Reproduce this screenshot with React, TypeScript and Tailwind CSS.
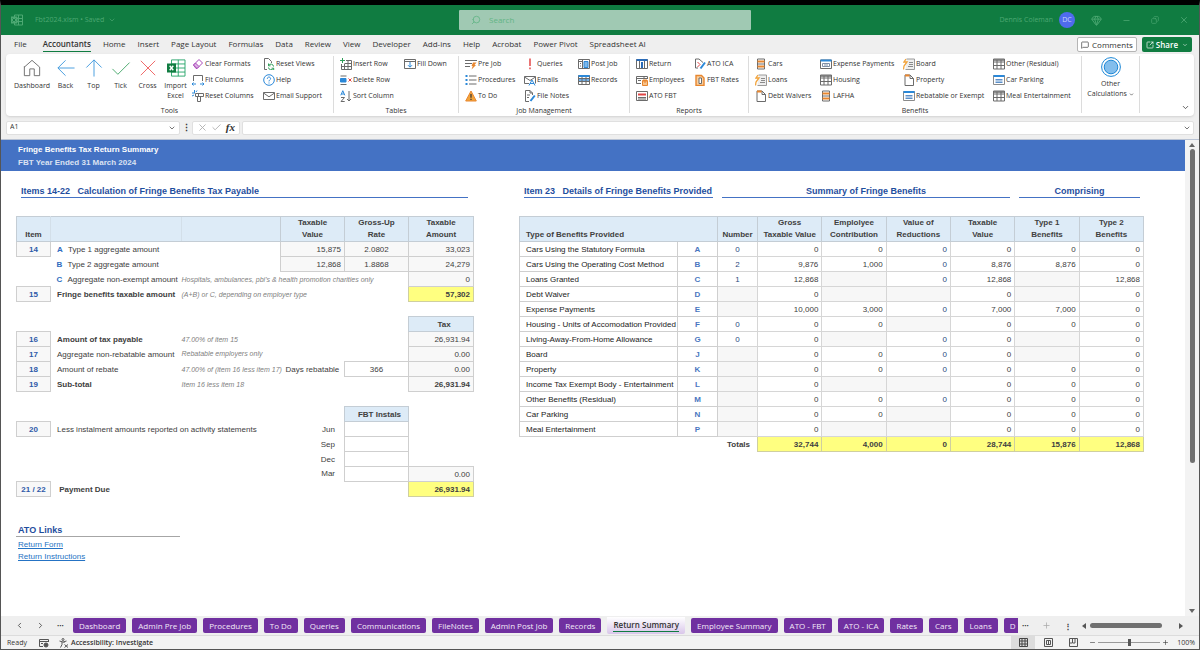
import React from 'react';
import { ChevronDown, ChevronLeft, ChevronRight, Check, X, Minus, Plus, Search, Gem, Copy, MessageSquare, SquareArrowOutUpRight } from 'lucide-react';

const G = '#6b6b6b';
const B = '#2b88d8';
const O = '#e8862e';

/* 12x12 ribbon drawings */
const icons: Record<string, React.ReactNode> = {
  eraser: <g fill="none" stroke="#a846b9"><path d="M1.5 7 7 1.5 10.5 5 5 10.5H4Z" /><path d="M3.5 5 7 8.5 5 10.5 1.5 7Z" fill="#dcb0e4" /></g>,
  fit: <g fill="none" stroke={G}><path d="M1.5 7V1.5H10.5V7" /><path d="M0 10H4M8 10H12M1.5 8.5 0 10 1.5 11.5M10.5 8.5 12 10 10.5 11.5" stroke={B} /></g>,
  resetCols: <g fill="none" stroke={G}><path d="M3.5 3.5H11.5V6.5H3.5ZM5.5 6.5V11.5H8.5V6.5M6.5 3.5V6.5" /><path d="M0 3H3M2.5 0V3M5 .5 4 2M0 6 2 5" stroke={B} /></g>,
  resetViews: <g fill="none" stroke={G}><path d="M4 11.5H1.5V.5H5.5L8.5 3.5V5" /><path d="M10.5 8.5A2.6 2.6 0 0 0 5.6 7.5M5.5 9.5A2.6 2.6 0 0 0 10.4 10.4M5.5 5.5V7.8H7.5M10.7 12V10.2H8.6" stroke="#2f9e58" /></g>,
  help: <g fill="none" stroke={B}><circle cx="6" cy="6" r="5.3" /><path d="M4.3 4.8C4.3 2.4 7.7 2.6 7.6 4.7 7.5 6 6 6 6 7.4M6 8.5V9.5" /></g>,
  mail: <g fill="none" stroke={G}><path d="M.5 2.5H11.5V9.5H.5ZM.5 3 6 6.8 11.5 3" /></g>,
  insertRow: <g fill="none" stroke={G}><path d="M6 2.5H11.5V11.5H1.5V6M1.5 8.5H11.5M4.5 6V11.5M8 2.5V11.5M4.5 5.5H11.5" /><path d="M2.5 0V5M0 2.5H5" stroke="#2f9e58" /></g>,
  deleteRow: <g fill="none"><path d="M.5 2H6.5M.5 10.5H6.5" stroke={G} /><path d="M.5 4.5H6V8H.5Z" fill={B} stroke={B} /><path d="M8.5 4.5 11.5 7.5M11.5 4.5 8.5 7.5" stroke="#e04545" /></g>,
  sort: <g fill="none" stroke={G}><path d="M9 1V11M7 9 9 11 11 9M1 7.5H4.5L1 11.5H4.7" /><path d="M.8 5.3 2.8.7 4.8 5.3M1.5 4H4" stroke={B} /></g>,
  fillDown: <g fill="none" stroke={G}><path d="M.5 1.5H11.5V10.5H.5ZM.5 3.5H11.5" /><path d="M6 4V9M4 7.2 6 9.2 8 7.2" stroke={B} /></g>,
  preJob: <g fill="none" stroke={G}><path d="M0 2.5H12M0 5.5H7M0 8.5H5" /><path d="M9 4.5H11.5L9.5 7H11L6.5 11.5 7.7 8H6.5L8 4.5Z" fill={O} stroke="none" /></g>,
  list: <g fill="none"><path d="M4 2H11.5M4 6H11.5M4 10H11.5" stroke={G} /><path d="M.5 2H2.5M.5 6H2.5M.5 10H2.5" stroke={B} strokeWidth="2" /></g>,
  warn: <g><path d="M6 1 11.3 11H.7Z" fill="#f2a33a" stroke={O} strokeLinejoin="round" /><path d="M6 4V7.8M6 8.8V10" stroke="#333" strokeWidth="1.2" /></g>,
  bang: <g stroke="#e23b3b" strokeWidth="1.4"><path d="M6 .5V8M6 9.5V11.2" /></g>,
  emails: <g fill="none" stroke={G}><path d="M5 9.5H.5V2.5H11.5V9.5M.5 3 6 6.5 11.5 3" /><path d="M5 11.5 8 6 11 11.5M6 9.5H10" stroke={B} /></g>,
  fileNote: <g fill="none" stroke={G}><path d="M5 11.5H1.5V.5H6L8.5 3V5M6 .5V3H8.5M3 5H6M3 7.5H5" /><path d="M10.8 5.5 6.5 11" stroke={B} strokeWidth="2" /></g>,
  postJob: <g fill="none" stroke={G}><path d="M.5 1.5H11.5V10.5H.5ZM.5 3.5H5M4.5 1.5V10.5M2 5.5H3M2 8H3" /><path d="M6 3.5H10V9.5H6Z" fill="#7fb8ea" stroke={B} /></g>,
  records: <g fill="none"><path d="M.5 4H11.5V8H.5Z" fill="#6fb0ea" /><path d="M.5 1.5H11.5V10.5H.5ZM.5 4.5H11.5M.5 7.5H11.5M4 1.5V10.5M8 1.5V10.5" stroke={G} /><path d="M.5 2H11.5" stroke={B} strokeWidth="2" /></g>,
  returnIco: <g fill="none" stroke={G}><path d="M.5 1.5H11.5V10.5H.5ZM3.5 3V10.5M8.5 3V10.5" /><path d="M.5 2H11.5M6 4V10" stroke="#2b6cb8" strokeWidth="2" /></g>,
  employees: <g fill="none" stroke={G}><path d="M5 9.5H.5V2.5H11.5V5M.5 4.5H11M2 6.5H5M8 2.5V5" /><path d="M6.5 6.5H11.5V11.5H6.5Z" fill="#f7c38c" stroke={O} /><path d="M8 5V8H10V5" stroke={O} /></g>,
  atoFbt: <g fill="none" stroke={G}><path d="M.5 1.5H11.5V10.5H.5ZM2 7.5H10M2 9H10" /><path d="M2 4.5H10" stroke="#e04545" strokeWidth="2" /></g>,
  atoIca: <g fill="none"><path d="M1.5 1V10H4M1.5 1H5L9 4.5" stroke={G} /><path d="M3.5 4 6 6.5 3.5 9" stroke="#e04545" /><path d="M11 4.5 6.5 10.5" stroke={B} strokeWidth="2" /></g>,
  fbtRates: <g fill="none"><path d="M2 1.5H7.5L10 4V11.5H2Z" fill="#f9cf9f" stroke={O} strokeWidth="1.4" /><path d="M5 4H7.5V9.5H5Z" fill="#fff" stroke={G} /></g>,
  orangeDoc: <g fill="none"><path d="M2.5 1H9.5V11H2.5Z" stroke={G} /><path d="M2.5 3.5H9.5M2.5 8.5H9.5" stroke={O} strokeWidth="2" /><path d="M3 6H9" stroke={G} /></g>,
  scroll: <g fill="none"><path d="M3.5 1H11.5V11.5H2.5" stroke="#9a9a9a" fill="#eee" /><path d="M6 4.5H10M6 6.5H10M5 8.5H10" stroke="#8a8a8a" /><path d="M3 1 1 4H4L1 8 .5 11.5" stroke="#f2a33a" strokeWidth="1.3" /></g>,
  page: <g fill="none" stroke={G}><path d="M2 1H7L10.5 4.5V11.5H2Z" /><path d="M7 1V4.5H10.5" /><path d="M2 1.5H6.5" stroke={O} strokeWidth="2" /></g>,
  expense: <g fill="none" stroke={G}><path d="M.5 2H11.5V10.5H.5Z" /><path d="M2.5 5.5H9.5V8.5H2.5ZM5 5.5V8.5M7 5.5V8.5" stroke="#7f8fa6" /><path d="M.5 2.5H11.5" stroke={B} strokeWidth="2" /></g>,
  grid: <g fill="none" stroke={G}><path d="M.5 1H11.5V11H.5ZM.5 4H11.5M.5 7.5H11.5M4 2V11M8 2V11" /><path d="M.5 2H11.5" strokeWidth="1.5" /></g>,
  form: <g fill="none" stroke="#8a8a8a"><path d="M.5 1.5H11.5V10.5H.5Z" /><path d="M2.5 5.5H9.5M2.5 7H9.5M2.5 8.5H9.5" stroke="#5b8fc9" /><path d="M.5 2H11.5" stroke={B} strokeWidth="2" /></g>,
};

const Ico = ({ name }: { name: string }) => (
  <svg viewBox="0 0 12 12" className="w-3 h-3 shrink-0">{icons[name]}</svg>
);

const bigButtons = [
  { label: 'Dashboard', width: 'w-[38px]', draw: <path d="M1.5 9 10 1.5 18.5 9V18.5H12.5V11H7.5V18.5H1.5V8" stroke="#666" /> },
  { label: 'Back', width: 'w-[29px]', draw: <path d="M19.5 10H1M9.5 1.5 1 10 9.5 18.5" stroke="#3a96dd" /> },
  { label: 'Top', width: 'w-[27px]', draw: <path d="M10 19.5V1M1.5 9.5 10 1 18.5 9.5" stroke="#3a96dd" /> },
  { label: 'Tick', width: 'w-[27px]', draw: <path d="M.5 11 6.5 17 19.5 4" stroke="#3fa565" /> },
  { label: 'Cross', width: 'w-[27px]', draw: <path d="M2 2 18 18M18 2 2 18" stroke="#ee5a5a" /> },
  {
    label: 'Import Excel',
    width: 'w-[29px]',
    draw: (
      <g>
        <path d="M5 1H20V19H5ZM5 5.5H20M5 10H20M5 14.5H20M12.5 1V19" stroke="#21a366" />
        <path d="M0 5H10V15H0Z" fill="#107c41" />
        <path d="M3 7.5 7 12.5M7 7.5 3 12.5" stroke="#fff" strokeWidth="1.5" />
      </g>
    ),
  },
];

type Column = { width: string; items: [string, string][] };

const groups: { name: string; columns: Column[] }[] = [
  {
    name: 'Tables',
    columns: [
      { width: 'w-16', items: [['insertRow', 'Insert Row'], ['deleteRow', 'Delete Row'], ['sort', 'Sort Column']] },
      { width: 'w-[54px]', items: [['fillDown', 'Fill Down']] },
    ],
  },
  {
    name: 'Job Management',
    columns: [
      { width: 'w-[59px]', items: [['preJob', 'Pre Job'], ['list', 'Procedures'], ['warn', 'To Do']] },
      { width: 'w-[54px]', items: [['bang', 'Queries'], ['emails', 'Emails'], ['fileNote', 'File Notes']] },
      { width: 'w-[51px]', items: [['postJob', 'Post Job'], ['records', 'Records']] },
    ],
  },
  {
    name: 'Reports',
    columns: [
      { width: 'w-[58px]', items: [['returnIco', 'Return'], ['employees', 'Employees'], ['atoFbt', 'ATO FBT']] },
      { width: 'w-[54px]', items: [['atoIca', 'ATO ICA'], ['fbtRates', 'FBT Rates']] },
    ],
  },
  {
    name: 'Benefits',
    columns: [
      { width: 'w-[65px]', items: [['orangeDoc', 'Cars'], ['scroll', 'Loans'], ['page', 'Debt Waivers']] },
      { width: 'w-[83px]', items: [['expense', 'Expense Payments'], ['grid', 'Housing'], ['orangeDoc', 'LAFHA']] },
      { width: 'w-[90px]', items: [['scroll', 'Board'], ['page', 'Property'], ['form', 'Rebatable or Exempt']] },
      { width: 'w-[88px]', items: [['grid', 'Other (Residual)'], ['form', 'Car Parking'], ['grid', 'Meal Entertainment']] },
    ],
  },
];

const toolColumns: Column[] = [
  { width: 'w-[71px]', items: [['eraser', 'Clear Formats'], ['fit', 'Fit Columns'], ['resetCols', 'Reset Columns']] },
  { width: 'w-[69px]', items: [['resetViews', 'Reset Views'], ['help', 'Help'], ['mail', 'Email Support']] },
];

const menus = ['Accountants', 'Home', 'Insert', 'Page Layout', 'Formulas', 'Data', 'Review', 'View', 'Developer', 'Add-ins', 'Help', 'Acrobat', 'Power Pivot', 'Spreadsheet AI'];

const sheets = ['Dashboard', 'Admin Pre Job', 'Procedures', 'To Do', 'Queries', 'Communications', 'FileNotes', 'Admin Post Job', 'Records', 'Return Summary', 'Employee Summary', 'ATO - FBT', 'ATO - ICA', 'Rates', 'Cars', 'Loans', 'D'];

const ItemColumn = ({ column }: { column: Column }) => (
  <div className={`${column.width} shrink-0`}>
    {column.items.map(([icon, label]) => (
      <button key={label} className="flex items-center gap-px h-4 whitespace-nowrap">
        <Ico name={icon} />
        {label}
      </button>
    ))}
  </div>
);

const TitleBar = () => (
  <header className="grid grid-cols-[1fr_292px_1fr] items-center h-[30px] pl-[10px] bg-[#107c41] text-[#4da873] text-[8px]">
    <div className="flex items-center">
      <svg viewBox="0 0 12 12" className="w-3 h-3 mr-3" fill="none" stroke="#4da873">
        <path d="M3.5 1H11.5V11H3.5ZM3.5 4.5H11.5M3.5 7.5H11.5M7.5 1V11" />
        <path d="M0 3H6V9H0Z" fill="#4da873" />
        <path d="M1.5 4.5 4.5 7.5M4.5 4.5 1.5 7.5" stroke="#107c41" />
      </svg>
      <button className="flex items-center gap-1 text-[7px]">Fbt2024.xlsm • Saved <ChevronDown size={8} /></button>
    </div>
    <label className="flex items-center gap-2 h-5 pl-3 rounded-[1px] bg-[#a0c9b3] text-[#62b585]">
      <Search size={10} className="-scale-x-100" />
      <input aria-label="Search" placeholder="Search" className="flex-1 outline-none placeholder:text-[#62b585]" />
    </label>
    <div className="flex items-center justify-end pr-[10px]">
      <span className="mr-[6px] text-[7px]">Dennis Coleman</span>
      <span className="flex items-center justify-center w-4 h-4 mr-4 rounded-full bg-[#4f6bed] text-[7px] text-[#c9d2fa]">DC</span>
      <div className="flex items-center gap-5">
        <button aria-label="Premium"><Gem size={11} /></button>
        <button aria-label="Minimise"><Minus size={9} /></button>
        <button aria-label="Restore"><Copy size={8} className="-scale-x-100" /></button>
        <button aria-label="Close"><X size={10} /></button>
      </div>
    </div>
  </header>
);

const MenuBar = () => (
  <nav className="flex items-center h-[19px] pl-[13px] pr-[7px] text-[8px]">
    <button className="h-[15px] mr-4 border-b border-transparent">File</button>
    <div className="flex gap-3 flex-1">
      {menus.map((menu) => (
        <button
          key={menu}
          className={menu === 'Accountants' ? 'h-[15px] border-b border-[#107c41] font-semibold whitespace-nowrap' : 'h-[15px] border-b border-transparent whitespace-nowrap'}
        >
          {menu}
        </button>
      ))}
    </div>
    <button className="flex items-center gap-[3px] h-[15px] px-[3px] mr-[5px] rounded-xs border border-[#b5b5b5] bg-white">
      <MessageSquare size={8} /> Comments
    </button>
    <button className="flex items-center gap-[2px] h-[15px] px-1 rounded-xs bg-[#107c41] text-white font-semibold">
      <SquareArrowOutUpRight size={8} /> Share <ChevronDown size={6} className="ml-[2px]" />
    </button>
  </nav>
);

const Ribbon = () => (
  <section className="flex h-[62px] mx-[5px] pt-[2px] rounded-sm bg-white shadow-sm text-[7px] leading-[10px]">
    <div className="flex flex-col gap-[2px]">
      <div className="flex h-12 pl-[7px] pr-px">
        {bigButtons.map(({ label, width, draw }) => (
          <button key={label} className={`${width} flex flex-col items-center gap-1 pt-[3px]`}>
            <svg viewBox="0 0 20 20" className="w-5 h-[18px]" fill="none">{draw}</svg>
            {label}
          </button>
        ))}
        <div className="w-[2px]" />
        {toolColumns.map((column) => <ItemColumn key={column.width} column={column} />)}
      </div>
      <div className="text-center">Tools</div>
    </div>
    {groups.map((group) => (
      <div key={group.name} className="flex flex-col gap-[2px] mb-[3px] border-l border-[#dcdcdc]">
        <div className="flex h-12 pl-[6px]">
          {group.columns.map((column) => <ItemColumn key={column.width} column={column} />)}
        </div>
        <div className="text-center">{group.name}</div>
      </div>
    ))}
    <div className="mb-[3px] w-[59px] border-x border-[#dcdcdc]">
      <button className="flex flex-col items-center w-full pt-px">
        <svg viewBox="0 0 20 20" className="w-5 h-5 mb-[2px]" fill="#83beec" stroke="#1b87d6">
          <circle cx="10" cy="10" r="9.4" fill="#fff" />
          <circle cx="10" cy="10" r="6.8" />
        </svg>
        <span>Other<br />Calculations <ChevronDown size={5} strokeWidth={3} className="inline" /></span>
      </button>
    </div>
    <button aria-label="Collapse ribbon" className="self-end ml-auto mr-1 mb-1"><ChevronDown size={9} /></button>
  </section>
);

const FormulaBar = () => (
  <div className="flex items-center gap-[2px] h-6 px-[5px] border-b border-[#b9c3d4] text-[7px]">
    <div className="flex items-center w-[174px] h-[14px] px-[3px] rounded-xs border border-[#e0e0e0] bg-white">
      <input aria-label="Name box" defaultValue="A1" className="flex-1 min-w-0 outline-none" />
      <ChevronDown size={8} />
    </div>
    <span className="w-2 text-center text-[9px] font-bold leading-none">⋮</span>
    <div className="flex items-center justify-between w-12 h-[14px] px-1 rounded-xs border border-[#e0e0e0] bg-white">
      <button aria-label="Cancel"><X size={11} strokeWidth={2} color="#b0b0b0" /></button>
      <button aria-label="Enter"><Check size={11} strokeWidth={2} color="#b0b0b0" /></button>
      <button aria-label="Insert function" className="font-['Liberation_Serif',serif] text-[11px] font-bold italic leading-none">fx</button>
    </div>
    <div className="flex items-center flex-1 h-[14px] px-[2px] rounded-xs border border-[#e0e0e0] bg-white">
      <input aria-label="Formula" className="flex-1 outline-none" />
      <ChevronDown size={8} />
    </div>
  </div>
);

const head = 'border border-[#c4cdd5] bg-[#ddebf7] font-bold text-center p-0';
const item = 'border border-[#cfcfcf] bg-[#f8f8f8] font-bold text-center text-[#2f5aa8]';
const val = 'border border-[#cfcfcf] bg-[#f8f8f8] text-right pr-[3px]';
const rate = 'border border-[#cfcfcf] bg-[#f8f8f8] text-center';
const open = 'border border-[#cfcfcf] bg-white text-center';
const total = 'border border-[#cfcfa0] bg-[#ffff80] text-right pr-[3px] font-bold';
const note = 'text-[7px] italic text-[#808080]';
const heading = 'border-b border-[#4472c4] text-[9px] leading-3 font-bold text-[#1f4e9e]';

const Letter = ({ children }: { children: string }) => (
  <span className="inline-block w-[11px] font-bold text-[#2f6cc0]">{children}</span>
);

const PayableTable = () => (
  <table className="w-[457px] table-fixed border-collapse whitespace-nowrap [&_tr]:h-[15px] [&_td]:py-0">
    <colgroup>
      <col className="w-[34px]" />
      <col className="w-[131px]" />
      <col className="w-[99px]" />
      <col className="w-16" />
      <col className="w-16" />
      <col className="w-[65px]" />
    </colgroup>
    <thead>
      <tr className="leading-3">
        <th className="border border-r-[#d3dfe9] border-[#c4cdd5] bg-[#ddebf7] p-0 align-bottom">Item</th>
        <th className="border-y border-[#c4cdd5] bg-[#ddebf7] p-0" />
        <th className="border border-l-[#d3dfe9] border-[#c4cdd5] bg-[#ddebf7] p-0" />
        <th className={head}>Taxable<br />Value</th>
        <th className={head}>Gross-Up<br />Rate</th>
        <th className={head}>Taxable<br />Amount</th>
      </tr>
    </thead>
    <tbody className="[&_td:nth-child(2)]:pl-[6px]">
      <tr><td className={item}>14</td><td><Letter>A</Letter>Type 1 aggregate amount</td><td /><td className={val}>15,875</td><td className={rate}>2.0802</td><td className={val}>33,023</td></tr>
      <tr><td /><td><Letter>B</Letter>Type 2 aggregate amount</td><td /><td className={val}>12,868</td><td className={rate}>1.8868</td><td className={val}>24,279</td></tr>
      <tr><td /><td><Letter>C</Letter>Aggregate non-exempt amount</td><td colSpan={3} className={note}>Hospitals, ambulances, pbi's &amp; health promotion charities only</td><td className={val}>0</td></tr>
      <tr><td className={item}>15</td><td className="font-bold">Fringe benefits taxable amount</td><td colSpan={3} className={note}>(A+B) or C, depending on employer type</td><td className={total}>57,302</td></tr>
      <tr><td colSpan={6} /></tr>
      <tr><td colSpan={5} /><td className={head}>Tax</td></tr>
      <tr><td className={item}>16</td><td className="font-bold">Amount of tax payable</td><td colSpan={3} className={note}>47.00% of item 15</td><td className={val}>26,931.94</td></tr>
      <tr><td className={item}>17</td><td>Aggregate non-rebatable amount</td><td colSpan={3} className={note}>Rebatable employers only</td><td className={val}>0.00</td></tr>
      <tr><td className={item}>18</td><td>Amount of rebate</td><td className={note}>47.00% of (item 16 less item 17)</td><td className="pl-[5px]">Days rebatable</td><td className={open}>366</td><td className={val}>0.00</td></tr>
      <tr><td className={item}>19</td><td className="font-bold">Sub-total</td><td colSpan={3} className={note}>Item 16 less item 18</td><td className={`${val} font-bold`}>26,931.94</td></tr>
      <tr><td colSpan={6} /></tr>
      <tr><td colSpan={4} /><td className={head}>FBT Instals</td><td /></tr>
      <tr><td className={item}>20</td><td colSpan={2}>Less instalment amounts reported on activity statements</td><td className="text-right pr-[9px]">Jun</td><td className={open} /><td /></tr>
      <tr><td colSpan={4} className="text-right pr-[9px]">Sep</td><td className={open} /><td /></tr>
      <tr><td colSpan={4} className="text-right pr-[9px]">Dec</td><td className={open} /><td /></tr>
      <tr><td colSpan={4} className="text-right pr-[9px]">Mar</td><td className={open} /><td className={val}>0.00</td></tr>
      <tr><td className={item}>21 / 22</td><td colSpan={4} className="font-bold">&nbsp;Payment Due</td><td className={total}>26,931.94</td></tr>
    </tbody>
  </table>
);

/* null marks a cell that does not apply to the benefit */
const benefits: [string, string, (string | null)[]][] = [
  ['Cars Using the Statutory Formula', 'A', ['0', '0', '0', '0', '0', '0', '0']],
  ['Cars Using the Operating Cost Method', 'B', ['2', '9,876', '1,000', '0', '8,876', '8,876', '0']],
  ['Loans Granted', 'C', ['1', '12,868', null, '0', '12,868', null, '12,868']],
  ['Debt Waiver', 'D', [null, '0', null, null, '0', null, '0']],
  ['Expense Payments', 'E', [null, '10,000', '3,000', '0', '7,000', '7,000', '0']],
  ['Housing - Units of Accomodation Provided', 'F', ['0', '0', '0', null, '0', '0', '0']],
  ['Living-Away-From-Home Allowance', 'G', ['0', '0', null, '0', '0', null, '0']],
  ['Board', 'J', [null, '0', '0', '0', '0', null, '0']],
  ['Property', 'K', [null, '0', '0', '0', '0', '0', '0']],
  ['Income Tax Exempt Body - Entertainment', 'L', [null, '0', null, null, '0', '0', '0']],
  ['Other Benefits (Residual)', 'M', [null, '0', '0', '0', '0', '0', '0']],
  ['Car Parking', 'N', [null, '0', '0', null, '0', '0', '0']],
  ['Meal Entertainment', 'P', [null, '0', null, null, '0', '0', '0']],
];

const benefitHeads = [['Gross', 'Taxable Value'], ['Emplolyee', 'Contribution'], ['Value of', 'Reductions'], ['Taxable', 'Value'], ['Type 1', 'Benefits'], ['Type 2', 'Benefits']];

const BenefitsTable = () => (
  <table className="w-[625px] table-fixed border-collapse whitespace-nowrap [&_tr]:h-[15px] [&_td]:py-0">
    <colgroup>
      <col className="w-[158px]" />
      <col className="w-10" />
      <col className="w-10" />
      <col span={6} />
    </colgroup>
    <thead>
      <tr className="leading-3">
        <th colSpan={2} className="border border-[#c4cdd5] bg-[#ddebf7] p-0 pl-[6px] text-left align-bottom">Type of Benefits Provided</th>
        <th className="border border-[#c4cdd5] bg-[#ddebf7] p-0 align-bottom">Number</th>
        {benefitHeads.map(([top, bottom], i) => <th key={i} className={head}>{top}<br />{bottom}</th>)}
      </tr>
    </thead>
    <tbody>
      {benefits.map(([name, letter, values]) => (
        <tr key={letter}>
          <td className="border border-[#cfcfcf] pl-[6px] pr-0 text-[#222]">{name}</td>
          <td className="border border-[#cfcfcf] text-center font-bold text-[#4a76c0]">{letter}</td>
          {values.map((value, i) => (
            <td
              key={i}
              className={`border border-[#d6d6d6] ${value === null ? 'bg-[#f7f7f7]' : ''} ${i === 0 ? 'text-center text-[#2b4a80]' : 'text-right pr-[3px]'} ${i === 3 ? 'text-[#2b4a80]' : ''}`}
            >
              {value}
            </td>
          ))}
        </tr>
      ))}
      <tr>
        <td colSpan={3} className="text-right pr-[7px] font-bold">Totals</td>
        {['32,744', '4,000', '0', '28,744', '15,876', '12,868'].map((value, i) => <td key={i} className={total}>{value}</td>)}
      </tr>
    </tbody>
  </table>
);

const Sheet = () => (
  <div className="flex flex-1 min-h-0 bg-white">
    <main className="flex-1 min-w-0 overflow-hidden font-['Liberation_Sans',Arial,sans-serif] text-[8px] leading-[13px] text-[#404040]">
      <div className="h-[31px] pt-[3px] pl-[17px] bg-[#4472c4] font-bold text-white">
        <h1>Fringe Benefits Tax Return Summary</h1>
        <p className="text-[#dbe2f2]">FBT Year Ended 31 March 2024</p>
      </div>
      <div className="flex gap-[46px] pt-[14px] pl-[15px]">
        <div className="w-[457px] shrink-0">
          <h2 className={`${heading} ml-[5px] mr-[5px] mb-[18px] whitespace-pre`}>Items 14-22   Calculation of Fringe Benefits Tax Payable</h2>
          <PayableTable />
        </div>
        <div className="w-[625px] shrink-0">
          <div className="flex gap-[9px] pl-[5px] pr-1 mb-[18px]">
            <h2 className={`${heading} w-[189px] whitespace-pre`}>Item 23   Details of Fringe Benefits Provided</h2>
            <h2 className={`${heading} w-[288px] text-center`}>Summary of Fringe Benefits</h2>
            <h2 className={`${heading} flex-1 text-center`}>Comprising</h2>
          </div>
          <BenefitsTable />
        </div>
      </div>
      <div className="flex flex-col items-start w-[164px] mt-[27px] ml-[15px] leading-3">
        <h2 className="w-full pl-[2px] mb-[2px] border-b border-[#a6a6a6] text-[9px] font-bold text-[#1f4e9e]">ATO Links</h2>
        <a href="#form" className="ml-[2px] text-[#2573c4] underline">Return Form</a>
        <a href="#instructions" className="ml-[2px] text-[#2573c4] underline">Return Instructions</a>
      </div>
    </main>
    <div className="flex flex-col items-center justify-between w-[14px] py-[3px] bg-[#f3f3f3]">
      <div className="flex flex-col items-center gap-[2px]">
        <svg viewBox="0 0 6 4" className="w-[6px] h-1"><path d="M0 4 3 0 6 4Z" fill="#666" /></svg>
        <div className="w-[5px] h-[314px] rounded-full bg-[#707070]" />
      </div>
      <svg viewBox="0 0 6 4" className="w-[6px] h-1"><path d="M0 0 3 4 6 0Z" fill="#666" /></svg>
    </div>
  </div>
);

const SheetTabs = () => (
  <div className="flex items-center h-[20px] pl-[14px] bg-[#efefef] text-[8px] border-b border-[#dcdcdc]">
    <button aria-label="Previous sheet" className="mr-3"><ChevronLeft size={9} /></button>
    <button aria-label="Next sheet" className="mr-3"><ChevronRight size={9} /></button>
    <button aria-label="More sheets" className="w-[16px] text-[6px] text-left leading-none">•••</button>
    <div className="flex items-center flex-1 min-w-0 gap-[6px] overflow-hidden">
      {sheets.map((sheet) =>
        sheet === 'Return Summary' ? (
          <button key={sheet} className="h-[17px] px-[6px] shrink-0 rounded-b-xs bg-linear-to-b from-white to-[#d9c6ea] font-semibold">
            <span className="block border-b border-[#107c41] leading-3">{sheet}</span>
          </button>
        ) : (
          <button key={sheet} className="h-[15px] px-[6px] shrink-0 rounded-xs bg-[#7030a0] text-[#f3eaf8]">{sheet}</button>
        ),
      )}
    </div>
    <div className="flex items-center shrink-0 w-[181px] pl-1">
      <button aria-label="All sheets" className="w-[16px] text-[6px] text-left leading-none">•••</button>
      <button aria-label="New sheet" className="ml-1 mr-[13px] text-[#aaa]"><Plus size={9} /></button>
      <span className="font-bold leading-none mr-[10px]">⋮</span>
      <svg viewBox="0 0 4 6" className="w-1 h-[6px]"><path d="M4 0 0 3 4 6Z" fill="#555" /></svg>
      <div className="w-[72px] h-[5px] ml-1 mr-[17px] rounded-full bg-[#707070]" />
      <svg viewBox="0 0 4 6" className="w-1 h-[6px]"><path d="M0 0 4 3 0 6Z" fill="#555" /></svg>
    </div>
  </div>
);

const StatusBar = () => (
  <footer className="flex items-center h-[13px] pl-[6px] pr-1 bg-[#f3f3f3] text-[7px] leading-none">
    <span className="w-8">Ready</span>
    <svg viewBox="0 0 10 10" className="w-[10px] h-[10px] mr-[10px]" fill="none" stroke="#555">
      <path d="M9.5 4V1.5H.5V8.5H4M.5 3.5H9.5M2 5.5H4" />
      <circle cx="7" cy="7" r="2" fill="#555" />
    </svg>
    <button className="flex items-center gap-[2px] font-semibold">
      <svg viewBox="0 0 10 10" className="w-[10px] h-[10px]" fill="none" stroke="#555">
        <circle cx="4" cy="1.5" r="1" />
        <path d="M.5 3 4 4 7.5 3M3 4V6.5L1.5 9.5M5 4V5M5.5 6.5 9 9.5M9 6.5 5.5 9.5" />
      </svg>
      Accessibility: Investigate
    </button>
    <div className="flex items-center h-full ml-auto">
      <button aria-label="Normal view" className="flex items-center justify-center w-6 h-full bg-[#dcdcdc]">
        <svg viewBox="0 0 9 9" className="w-[9px] h-[9px]" fill="none" stroke="#444"><path d="M.5.5H8.5V8.5H.5ZM.5 3H8.5M.5 6H8.5M3 .5V8.5M6 .5V8.5" /></svg>
      </button>
      <button aria-label="Page layout" className="flex items-center justify-center w-[26px] h-full">
        <svg viewBox="0 0 9 9" className="w-[9px] h-[9px]" fill="none" stroke="#555"><path d="M.5.5H8.5V8.5H.5ZM2.5 2.5H6.5V6.5H2.5ZM4.5 2.5V6.5" /></svg>
      </button>
      <button aria-label="Page break preview" className="flex items-center justify-center w-6 h-full">
        <svg viewBox="0 0 9 9" className="w-[9px] h-[9px]" fill="none" stroke="#555"><path d="M.5.5H8.5V8.5H.5ZM3.5.5V5H6V.5M.5 5H3" /></svg>
      </button>
      <button aria-label="Zoom out" className="ml-1"><Minus size={7} /></button>
      <input
        type="range"
        aria-label="Zoom"
        defaultValue={50}
        className="w-[62px] h-px mx-[2px] appearance-none bg-[#999] [&::-webkit-slider-thumb]:appearance-none [&::-webkit-slider-thumb]:w-[3px] [&::-webkit-slider-thumb]:h-[7px] [&::-webkit-slider-thumb]:bg-[#555]"
      />
      <button aria-label="Zoom in"><Plus size={7} /></button>
      <span className="ml-2">100%</span>
    </div>
  </footer>
);

export default function App() {
  return (
    <div className="flex flex-col h-screen border border-t-[5px] border-[#555] border-t-black bg-[#efefef] overflow-hidden font-['Open_Sans','Noto_Sans',sans-serif] text-[#333]">
      <TitleBar />
      <MenuBar />
      <Ribbon />
      <FormulaBar />
      <Sheet />
      <SheetTabs />
      <StatusBar />
    </div>
  );
}
